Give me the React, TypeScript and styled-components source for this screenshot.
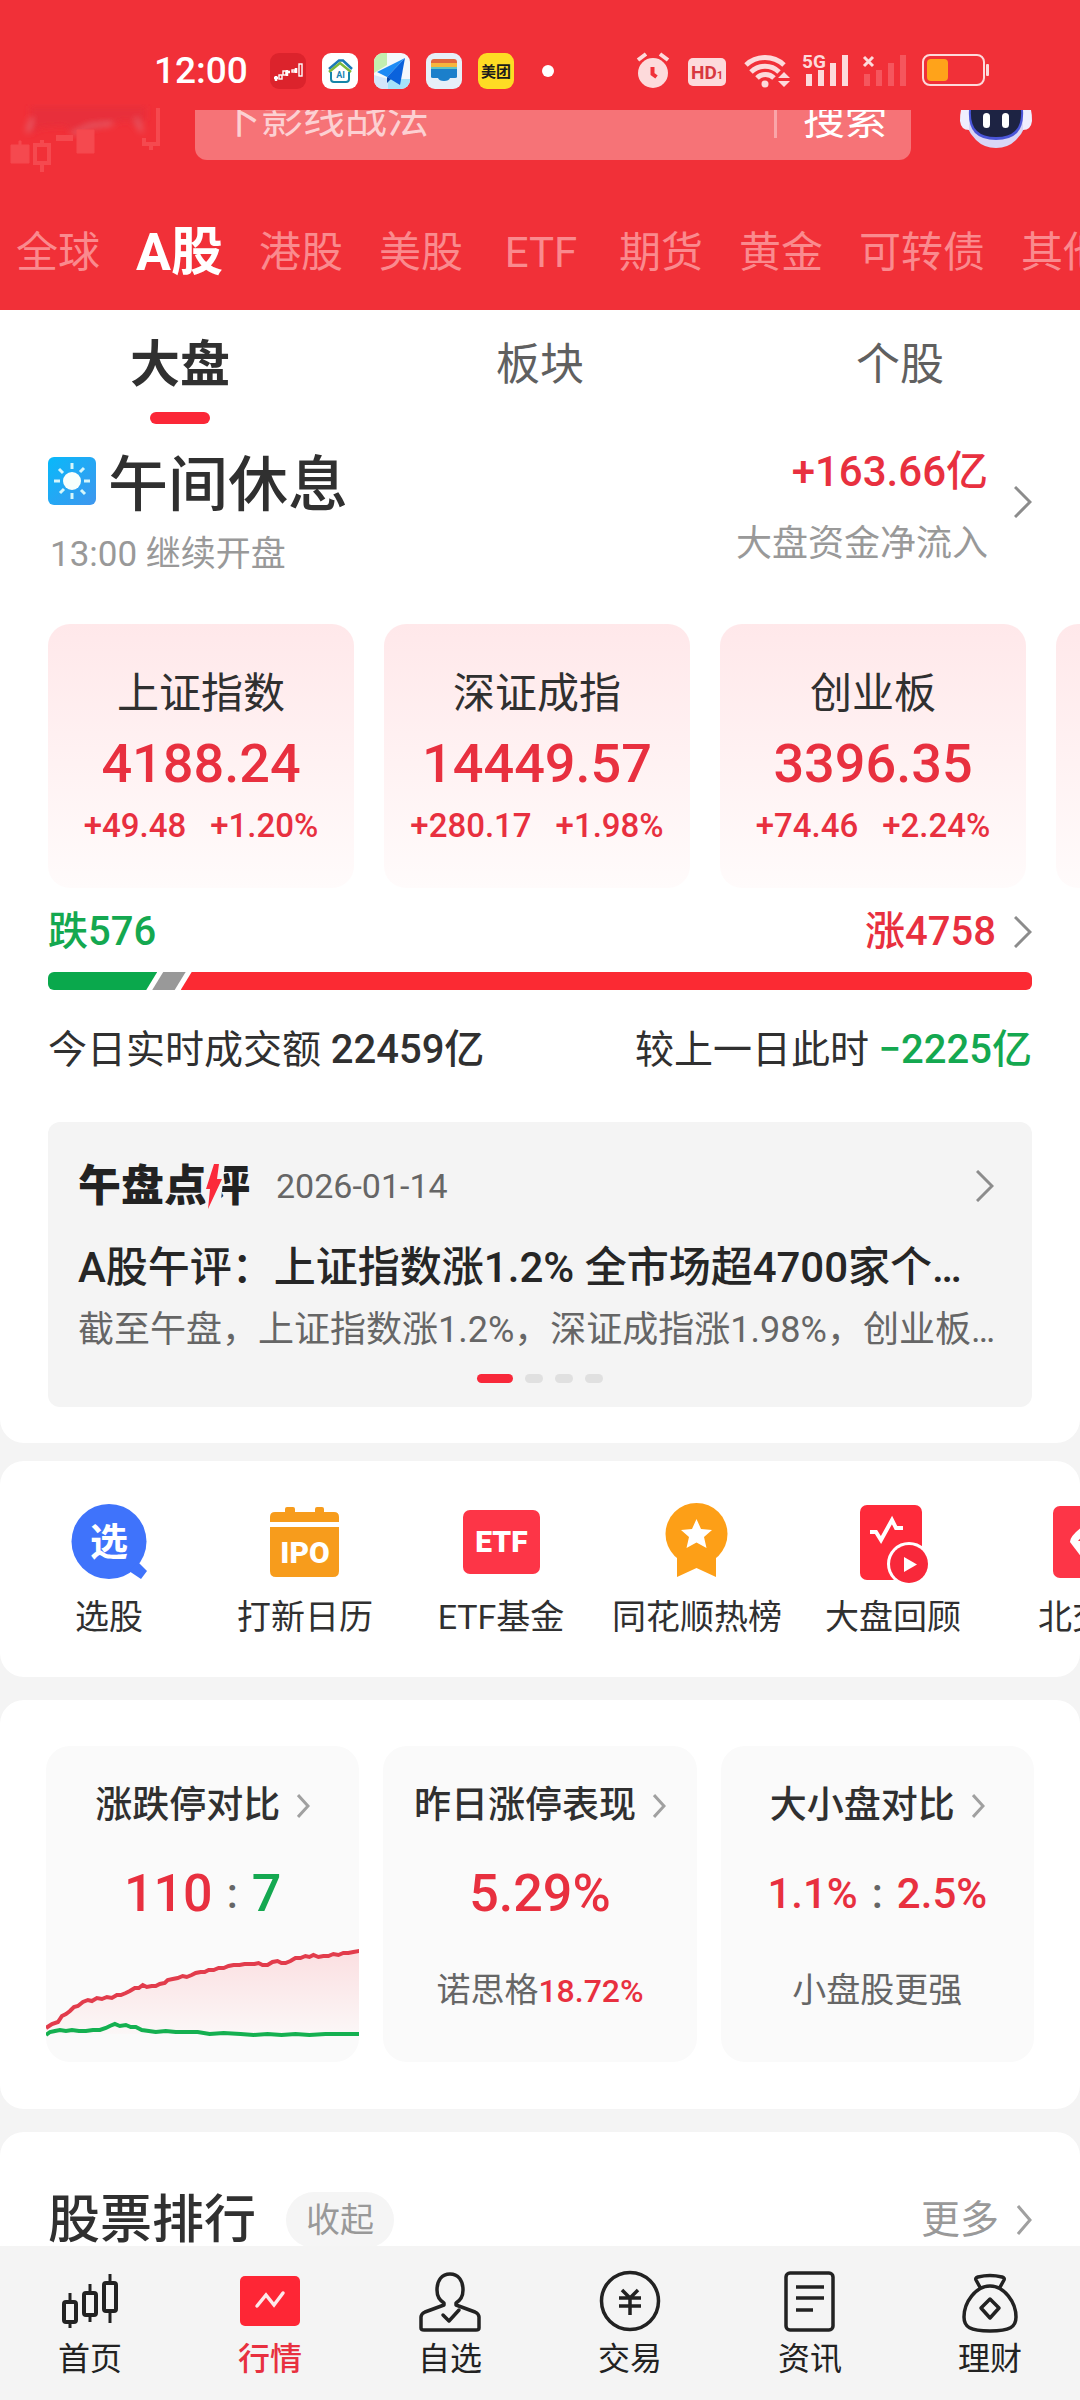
import React from "react";
import styled, { createGlobalStyle, css } from "styled-components";

const red = "#e8303f";
const green = "#14a850";
const brand = "#f13038";
const ink = "#303030";

const GlobalStyle = createGlobalStyle`
  *, *::before, *::after { box-sizing: border-box; }
  body {
    margin: 0;
    background: #f4f4f4;
    color: ${ink};
    font-family: Roboto, "Noto Sans CJK SC", sans-serif;
  }
  button, input { font: inherit; color: inherit; }
  button { border: 0; padding: 0; background: none; cursor: pointer; }
  a { color: inherit; text-decoration: none; }
  h2, h3, p { margin: 0; font-weight: 400; }
  svg { display: block; }
`;

const Screen = styled.div`
  display: flex;
  flex-direction: column;
  height: 100vh;
  overflow: hidden;
`;

/* ---------- header ---------- */

const Header = styled.header`
  flex: none;
  background: ${brand};
`;

const StatusBar = styled.div`
  display: flex;
  align-items: center;
  justify-content: space-between;
  height: 104px;
  padding: 38px 90px 0 154px;
`;

const StatusGroup = styled.div<{ $gap: number }>`
  display: flex;
  align-items: center;
  gap: ${(p) => p.$gap}px;
  color: #fff;
`;

const Clock = styled.time`
  width: 100px;
  font-size: 37px;
  line-height: 40px;
  font-weight: 500;
`;

const NoticeDot = styled.span`
  width: 12px;
  height: 12px;
  margin-left: 12px;
  border-radius: 50%;
  background: #fff;
`;

const SearchRow = styled.div`
  display: flex;
  align-items: flex-end;
  height: 56px;
`;

const LogoSlot = styled.div`
  flex: none;
  width: 195px;
  height: 56px;
`;

const SearchClip = styled.div`
  display: flex;
  flex: 1;
  align-items: flex-end;
  height: 50px;
  overflow: hidden;
`;

const SearchBox = styled.form`
  display: flex;
  flex: 1;
  align-items: center;
  height: 84px;
  padding: 0 24px;
  border-radius: 12px;
  background: #f67377;
`;

const SearchInput = styled.input`
  flex: 1;
  min-width: 0;
  height: 60px;
  padding: 0;
  border: 0;
  outline: 0;
  background: none;
  font-size: 42px;
  &::placeholder {
    color: #fcd0d2;
    opacity: 1;
  }
`;

const SearchButton = styled.button`
  height: 40px;
  padding-left: 26px;
  border-left: 3px solid #faa5a8;
  color: #fff;
  font-size: 42px;
  line-height: 44px;
`;

const RobotButton = styled.button`
  flex: none;
  display: flex;
  justify-content: center;
  width: 169px;
  height: 50px;
`;

const MarketTabs = styled.nav`
  display: flex;
  align-items: center;
  gap: 36px;
  height: 150px;
  padding: 36px 0 0 16px;
  overflow: hidden;
`;

const MarketTab = styled.button<{ $active?: boolean }>`
  flex: none;
  min-width: 84px;
  color: ${(p) => (p.$active ? "#fff" : "#fa8a8e")};
  font-size: ${(p) => (p.$active ? 52 : 42)}px;
  font-weight: ${(p) => (p.$active ? 700 : 400)};
  line-height: 64px;
`;

/* ---------- body ---------- */

const Main = styled.main`
  flex: 1;
  min-height: 0;
  overflow: hidden;
`;

const Panel = styled.section<{ $gap?: number; $square?: boolean }>`
  margin-top: ${(p) => p.$gap ?? 0}px;
  border-radius: ${(p) => (p.$square ? "0 0 24px 24px" : "24px")};
  background: #fff;
  overflow: hidden;
`;

const ViewTabs = styled.nav`
  display: grid;
  grid-template-columns: repeat(3, 1fr);
`;

const ViewTab = styled.button<{ $active?: boolean }>`
  display: flex;
  flex-direction: column;
  align-items: center;
  gap: 16px;
  padding-top: 24px;
  color: ${(p) => (p.$active ? ink : "#606060")};
  font-size: ${(p) => (p.$active ? 50 : 44)}px;
  font-weight: ${(p) => (p.$active ? 700 : 400)};
  line-height: 62px;
  &::after {
    content: "";
    width: 60px;
    height: 12px;
    border-radius: 6px;
    background: ${(p) => (p.$active ? "#fb2737" : "transparent")};
  }
`;

const Row = styled.div<{ $top: number }>`
  display: flex;
  justify-content: space-between;
  margin: ${(p) => p.$top}px 48px 0;
`;

const SessionTitle = styled.h2`
  display: flex;
  align-items: center;
  gap: 12px;
  padding-top: 2px;
  font-size: 60px;
  font-weight: 500;
  line-height: 72px;
  svg {
    margin-bottom: 10px;
  }
`;

const SessionNote = styled.p`
  margin-top: 8px;
  padding-left: 2px;
  color: #999;
  font-size: 35px;
  line-height: 50px;
`;

const FlowLink = styled.a`
  display: flex;
  align-items: center;
  gap: 26px;
  height: 116px;
  text-align: right;
  > svg {
    margin-bottom: 8px;
  }
`;

const FlowValue = styled.p`
  color: ${red};
  font-size: 42px;
  font-weight: 500;
  line-height: 48px;
`;

const FlowLabel = styled.p`
  margin-top: 28px;
  color: #999;
  font-size: 36px;
  line-height: 40px;
`;

const IndexRow = styled.div`
  display: flex;
  gap: 30px;
  margin-top: 44px;
  padding-left: 48px;
  overflow: hidden;
`;

const IndexCard = styled.a`
  flex: none;
  width: 306px;
  height: 264px;
  padding-top: 46px;
  border-radius: 22px;
  background: linear-gradient(#ffe8ea, #fffbfb);
  text-align: center;
`;

const IndexName = styled.h3`
  font-size: 42px;
  line-height: 48px;
`;

const IndexValue = styled.p`
  margin-top: 18px;
  color: ${red};
  font-size: 54px;
  font-weight: 500;
  line-height: 56px;
`;

const IndexChange = styled.p`
  display: flex;
  justify-content: center;
  gap: 24px;
  margin-top: 14px;
  color: ${red};
  font-size: 33px;
  font-weight: 500;
  line-height: 40px;
`;

const Breadth = styled.a<{ $color: string }>`
  display: flex;
  align-items: center;
  gap: 18px;
  color: ${(p) => p.$color};
  font-size: 40px;
  font-weight: 500;
  line-height: 48px;
`;

const BreadthBar = styled.div`
  display: flex;
  gap: 6px;
  height: 18px;
  margin: 16px 48px 0;
  border-radius: 6px;
  overflow: hidden;
`;

const Segment = styled.span<{ $color: string; $edge: "start" | "mid" | "end" }>`
  flex: ${(p) => (p.$edge === "end" ? "1" : "none")};
  margin-left: ${(p) => (p.$edge === "start" ? 0 : -11)}px;
  background: ${(p) => p.$color};
  clip-path: ${(p) =>
    p.$edge === "start"
      ? "polygon(0 0, 100% 0, calc(100% - 11px) 100%, 0 100%)"
      : p.$edge === "mid"
        ? "polygon(11px 0, 100% 0, calc(100% - 11px) 100%, 0 100%)"
        : "polygon(11px 0, 100% 0, 100% 100%, 0 100%)"};
`;

const Turnover = styled.p`
  font-size: 39px;
  line-height: 48px;
`;

const Strong = styled.strong<{ $color?: string; $size?: number }>`
  color: ${(p) => p.$color ?? "inherit"};
  font-size: ${(p) => p.$size ?? 40}px;
  font-weight: 500;
`;

const Review = styled.article`
  margin: 48px 48px 36px;
  padding: 36px 30px 24px;
  border-radius: 12px;
  background: #f4f4f4;
`;

const ReviewHead = styled.header`
  display: flex;
  align-items: center;
  padding-right: 8px;
`;

const ReviewBrand = styled.h2`
  position: relative;
  color: #222;
  font-size: 43px;
  font-style: oblique 8deg;
  font-weight: 900;
  line-height: 56px;
`;

const Bolt = styled.svg`
  position: absolute;
  top: 4px;
  left: 127px;
`;

const ReviewDate = styled.time`
  flex: 1;
  margin-left: 26px;
  color: #666;
  font-size: 34px;
  line-height: 56px;
`;

const oneLine = css`
  overflow: hidden;
  white-space: nowrap;
`;

const ReviewTitle = styled.h3`
  ${oneLine}
  margin-top: 26px;
  color: #262626;
  font-size: 42px;
  font-weight: 500;
  line-height: 56px;
`;

const ReviewText = styled.p`
  ${oneLine}
  margin-top: 10px;
  color: #666;
  font-size: 36px;
  line-height: 48px;
`;

const Pager = styled.div`
  display: flex;
  justify-content: center;
  gap: 12px;
  margin-top: 20px;
`;

const PagerDot = styled.span<{ $active?: boolean }>`
  width: ${(p) => (p.$active ? 36 : 18)}px;
  height: 9px;
  border-radius: 5px;
  background: ${(p) => (p.$active ? "#f8283a" : "#e0e0e0")};
`;

const Shortcuts = styled.nav`
  display: flex;
  padding: 40px 0 38px 11px;
`;

const Shortcut = styled.a`
  display: flex;
  flex: none;
  flex-direction: column;
  align-items: center;
  gap: 14px;
  width: 196px;
  font-size: 34px;
  line-height: 44px;
`;

const StatGrid = styled.div`
  display: grid;
  grid-template-columns: repeat(3, 1fr);
  gap: 24px;
  padding: 46px 46px 47px;
`;

const StatCard = styled.a`
  height: 316px;
  padding-top: 36px;
  border-radius: 24px;
  background: #fafafa;
  text-align: center;
`;

const StatTitle = styled.h3`
  display: flex;
  align-items: center;
  justify-content: center;
  gap: 17px;
  font-size: 37px;
  font-weight: 500;
  line-height: 48px;
`;

const StatValue = styled.p<{ $size: number }>`
  display: flex;
  align-items: center;
  justify-content: center;
  gap: 14px;
  margin-top: 32px;
  color: ${red};
  font-size: ${(p) => p.$size}px;
  font-weight: 500;
  line-height: 64px;
`;

const Versus = styled.span`
  color: #666;
  font-size: 42px;
  font-weight: 500;
  line-height: 60px;
`;

const Fall = styled.span`
  color: ${green};
`;

const StatNote = styled.p`
  margin-top: 42px;
  color: #666;
  font-size: 34px;
  line-height: 44px;
`;

const StatChart = styled.svg`
  width: 100%;
  height: 100px;
  margin-top: 18px;
`;

const RankHead = styled.div`
  display: flex;
  align-items: center;
  padding: 56px 48px 60px;
`;

const RankTitle = styled.h2`
  padding-top: 3px;
  font-size: 52px;
  font-weight: 500;
  line-height: 60px;
`;

const Chip = styled.button`
  width: 108px;
  height: 56px;
  margin-left: 30px;
  border-radius: 28px;
  background: #f5f5f5;
  color: #999;
  font-size: 34px;
  line-height: 56px;
`;

const More = styled.a`
  display: flex;
  align-items: center;
  gap: 18px;
  margin-left: auto;
  color: #999;
  font-size: 39px;
  line-height: 56px;
`;

/* ---------- bottom bar ---------- */

const BottomBar = styled.nav`
  display: grid;
  flex: none;
  grid-template-columns: repeat(6, 1fr);
  height: 154px;
  background: #f4f4f4;
`;

const BottomItem = styled.a<{ $active?: boolean }>`
  display: flex;
  flex-direction: column;
  align-items: center;
  gap: 6px;
  padding-top: 23px;
  color: ${(p) => (p.$active ? red : "#222")};
  font-size: 32px;
  font-weight: ${(p) => (p.$active ? 500 : 400)};
  line-height: 40px;
`;

/* ---------- drawings ---------- */

const Chevron = ({ w = 18, h = 32, color = "#8c8c8c" }: { w?: number; h?: number; color?: string }) => (
  <svg width={w} height={h} viewBox={`0 0 ${w} ${h}`} fill="none" stroke={color} strokeWidth="3" aria-hidden="true">
    <path d={`M1 1 L${w - 2} ${h / 2} L1 ${h - 1}`} />
  </svg>
);

const svgText = { fontFamily: 'Roboto, "Noto Sans CJK SC", sans-serif' };

const AppIcons = () => (
  <>
    <svg width="36" height="36" viewBox="0 0 36 36">
      <rect width="36" height="36" rx="9" fill="#dc232c" />
      <g stroke="#fff" strokeWidth="1.4" fill="none">
        <path d="M4 25h4M6 23v5M17 17v6M17 19h3" strokeWidth="2.4" />
        <rect x="9" y="22" width="3" height="4" />
        <rect x="13" y="18" width="3" height="4" />
        <rect x="22" y="17" width="3" height="2" />
        <path d="M26 15v5" strokeWidth="2.6" />
        <rect x="29" y="11" width="3" height="12" />
      </g>
    </svg>
    <svg width="36" height="36" viewBox="0 0 36 36">
      <rect width="36" height="36" rx="9" fill="#fff" />
      <path d="M7 16 17 7.500h4L30 16" fill="none" stroke="#1b77b8" strokeWidth="2.500" />
      <path d="M7 19 18 10l11 9" fill="none" stroke="#7cb93c" strokeWidth="2.500" />
      <path d="M9 19v7q0 3 3 3h12q3 0 3-3v-7" fill="none" stroke="#1585a8" strokeWidth="2" />
      <text x="18.500" y="25" fontSize="9" fontWeight="700" fill="#1b83b4" textAnchor="middle" style={svgText}>AI</text>
    </svg>
    <svg width="36" height="36" viewBox="0 0 36 36">
      <defs><clipPath id="mapClip"><rect width="36" height="36" rx="9" /></clipPath></defs>
      <g clipPath="url(#mapClip)">
        <rect width="36" height="36" fill="#f4f8fb" />
        <path d="M0 0h13v12L0 20z" fill="#c4eeb0" />
        <path d="M14 36V26h22v10z" fill="#a6e2fa" />
        <path d="M0 22l14 4v10H0z" fill="#d3e6fb" />
      </g>
      <path d="M31 5 3 19l10 5z" fill="#1e8bf5" />
      <path d="M31 5 13 24l13 8z" fill="#0a62dc" />
      <path d="M13 24v6l4-4z" fill="#0847a8" />
    </svg>
    <svg width="36" height="36" viewBox="0 0 36 36">
      <rect width="36" height="36" rx="9" fill="#e6eff8" />
      <path d="M5 9q0-3 3-3h20q3 0 3 3v3H5z" fill="#e2683c" />
      <path d="M5 10h26v5H5z" fill="#f6b63c" />
      <path d="M5 14h26v3H5z" fill="#62c4c0" />
      <path d="M5 16h26v8q0 1-2 1h-5q-1 3-6 3t-6-3H7q-2 0-2-1z" fill="#1b7fcb" />
    </svg>
    <svg width="36" height="36" viewBox="0 0 36 36">
      <rect width="36" height="36" rx="9" fill="#fedc24" />
      <text x="18" y="23.500" fontSize="15" fontWeight="700" fill="#1b1b1b" textAnchor="middle" style={svgText}>美团</text>
    </svg>
  </>
);

const pale = "#fddadb";

const SystemIcons = () => (
  <svg width="354" height="38" viewBox="0 0 354 38" aria-hidden="true">
    {/* alarm */}
    <circle cx="17" cy="21" r="15" fill={pale} />
    <path d="M2 8l8-6M32 8l-8-6" stroke={pale} strokeWidth="4" />
    <path d="M16.500 15v7l4 3" stroke={brand} strokeWidth="4" fill="none" />
    {/* HD */}
    <rect x="52" y="6" width="38" height="28" rx="5" fill={pale} />
    <text x="55" y="27" fontSize="19" fontWeight="700" fill="#d8383f" style={svgText}>HD<tspan fontSize="11">1</tspan></text>
    {/* wifi */}
    <g fill="none" stroke={pale} strokeWidth="5">
      <path d="M110 13a28 28 0 0 1 38 0" />
      <path d="M115 20a20 20 0 0 1 28 0" />
      <path d="M121 26a12 12 0 0 1 17 0" />
    </g>
    <circle cx="129" cy="32" r="3.500" fill={pale} />
    <path d="M142 26l6-6 6 6zM142 29h12l-6 6z" fill={pale} />
    {/* 5G */}
    <text x="166" y="16" fontSize="19" fontWeight="700" fill={pale} style={svgText}>5G</text>
    <g fill={pale}>
      <rect x="170" y="22" width="6" height="12" />
      <rect x="182" y="18" width="6" height="16" />
      <rect x="194" y="11" width="6" height="23" />
      <rect x="206" y="3" width="6" height="31" />
    </g>
    {/* empty second SIM */}
    <path d="M228 5l9 9M237 5l-9 9" stroke={pale} strokeWidth="3" />
    <g fill="#f5565d">
      <rect x="228" y="22" width="6" height="12" />
      <rect x="240" y="18" width="6" height="16" />
      <rect x="252" y="11" width="6" height="23" />
      <rect x="264" y="3" width="6" height="31" />
    </g>
    {/* battery */}
    <rect x="287" y="3" width="61" height="30" rx="7" fill="none" stroke={pale} strokeWidth="2" />
    <rect x="291" y="7" width="21" height="22" rx="4" fill="#ffa31a" />
    <rect x="350" y="12" width="3" height="12" rx="1" fill={pale} />
  </svg>
);

const CandleLogo = () => (
  <svg width="195" height="72" viewBox="0 0 195 72" aria-hidden="true">
    <defs>
      <filter id="soft" x="-10%" y="-10%" width="120%" height="120%"><feGaussianBlur stdDeviation="3" /></filter>
    </defs>
    <g filter="url(#soft)">
      <path d="M30 2h116v14l-10 8-6-8-22 4-30 12-14-10-24 2-10 6z" fill="#e42c3a" opacity=".7" />
      <path d="M27 28l5-14M72 30l18-8 22-2M136 14l6 14" stroke="#e08a98" strokeWidth="3" fill="none" opacity=".6" />
    </g>
    <g fill="#f5494f" stroke="#f5494f">
      <path d="M11 41h18v18H11zM19 37h2v4h-2z" />
      <path d="M56 31h17v6H56z" stroke="none" />
      <path d="M77 26h17v23H77z" />
      <g fill="none" strokeWidth="4">
        <path d="M35 41h14v18H35zM42 36v4M42 60v8" />
        <path d="M158 4v36h-14v-6M151 41v5" />
      </g>
    </g>
  </svg>
);

const Robot = () => (
  <svg width="74" height="40" viewBox="0 0 74 40" aria-hidden="true">
    <path d="M5 0h64q0 18-12 30-8 8-20 8t-20-8Q5 18 5 0z" fill="#d9d6f6" />
    <path d="M2 0h8v20q-8 0-9-9 0-7 1-11zM64 0h8q1 4 1 11-1 9-9 9z" fill="#efeefe" />
    <path d="M10 0h54q1 15-6 23-7 7-21 7t-21-7Q9 15 10 0z" fill="#4a55d8" />
    <path d="M12 0h50q1 14-6 21-6 6-19 6t-19-6Q11 14 12 0z" fill="#1d2343" />
    <rect x="24" y="3" width="7" height="15" rx="3.500" fill="#fff" />
    <rect x="43" y="3" width="7" height="15" rx="3.500" fill="#fff" />
  </svg>
);

const SunIcon = () => (
  <svg width="48" height="48" viewBox="0 0 48 48" aria-hidden="true">
    <defs>
      <linearGradient id="sky" x1="0" y1="0" x2="1" y2="1">
        <stop offset="0" stopColor="#08b9fa" />
        <stop offset="1" stopColor="#3f96ee" />
      </linearGradient>
    </defs>
    <rect width="48" height="48" rx="6" fill="url(#sky)" />
    <circle cx="24" cy="24" r="9" fill="#f7fffc" />
    <path d="M24 6v6M24 36v6M6 24h6M36 24h6M11 12l4 4M33 33l4 4M36 11l-4 4M16 32l-4 4" stroke="#d5f6fb" strokeWidth="3" />
  </svg>
);

const iconBox = { width: 80, height: 80, viewBox: "0 0 80 80", "aria-hidden": true, overflow: "visible" } as const;

const PickIcon = () => (
  <svg {...iconBox}>
    <circle cx="40" cy="40.500" r="37.500" fill="#3f73fb" />
    <path d="M60 70l9-9 9 9-6 8z" fill="#3f73fb" />
    <text x="40" y="54" fontSize="38" fontWeight="700" fill="#fff" textAnchor="middle" style={svgText}>选</text>
  </svg>
);

const IpoIcon = () => (
  <svg {...iconBox}>
    <path d="M5 21v-5q0-5 5-5h10V8q0-2 2-2h6q2 0 2 2v3h20V8q0-2 2-2h5q2 0 2 2v3h10q5 0 5 5v5z" fill="#f79c1c" />
    <path d="M5 26h69v44q0 6-6 6H11q-6 0-6-6z" fill="#f79c1c" />
    <text x="40" y="62" fontSize="30" fontWeight="900" fill="#fff" textAnchor="middle" style={svgText}>IPO</text>
  </svg>
);

const EtfIcon = () => (
  <svg {...iconBox}>
    <rect x="2" y="9" width="77" height="64" rx="7" fill="#fd3547" />
    <text x="40.500" y="51" fontSize="30" fontWeight="900" fill="#fff" textAnchor="middle" style={svgText}>ETF</text>
  </svg>
);

const MedalIcon = () => (
  <svg {...iconBox}>
    <circle cx="39.500" cy="33" r="31" fill="#fd9f17" />
    <path d="M20 54h39v22l-19.500-9L20 76z" fill="#fd9f17" />
    <path d="M39.500 18l4.500 10 11 1-8 7 2.500 11-10-5.500-10 5.500L32 36l-8-7 11-1z" fill="#fff" />
  </svg>
);

const ReplayIcon = () => (
  <svg {...iconBox}>
    <rect x="7" y="4" width="62" height="75" rx="7" fill="#fe2a3a" />
    <path d="M17 31h6l5 8 11-20 4 8h7" fill="none" stroke="#fff" strokeWidth="4" />
    <circle cx="56" cy="63" r="20" fill="none" stroke="#fff" strokeWidth="4" />
    <circle cx="56" cy="63" r="19" fill="#f8283a" />
    <path d="M51 56l13 7.500L51 71z" fill="#fff" />
    <path d="M36 80h8l2 4H36z" fill="#fff" />
  </svg>
);

const NorthIcon = () => (
  <svg {...iconBox}>
    <rect x="4" y="5" width="72" height="72" rx="7" fill="#fd3547" />
    <path d="M21 41q0-6 12-15l7-4 7 4q12 9 12 15L40 66z" fill="#fff" />
    <path d="M29 40l11-12 11 12z" fill="#fd3547" />
  </svg>
);

const NavHome = () => (
  <svg width="64" height="64" viewBox="0 0 64 64" fill="none" stroke="#222" strokeWidth="4" aria-hidden="true">
    <rect x="6" y="33" width="12" height="20" rx="2" />
    <rect x="26" y="24" width="12" height="22" rx="2" />
    <rect x="46" y="14" width="12" height="28" rx="2" />
    <path d="M12 24v9M12 53v6M32 15v9M32 46v7M52 5v9M52 42v12" strokeWidth="3" />
  </svg>
);

const NavQuotes = () => (
  <svg width="64" height="64" viewBox="0 0 64 64" aria-hidden="true">
    <rect x="2" y="7" width="60" height="50" rx="5" fill="#fe2635" />
    <path d="M19 37l9-11 8 10 9-12" fill="none" stroke="#fde8ea" strokeWidth="3.500" strokeLinecap="round" />
  </svg>
);

const NavWatch = () => (
  <svg width="64" height="64" viewBox="0 0 64 64" fill="none" stroke="#222" strokeWidth="3.500" strokeLinecap="round" strokeLinejoin="round" aria-hidden="true">
    <path d="M26 34c-5-3-7-7-7-13 0-10 5-16 13-16s13 6 13 16c0 6-2 10-7 13v2l19 7q4 2 4 5v11q0 2-3 2H6q-3 0-3-2V48q0-3 4-5l19-7z" />
    <path d="M25 46l6 6 10-11" />
  </svg>
);

const NavTrade = () => (
  <svg width="64" height="64" viewBox="0 0 64 64" fill="none" stroke="#222" strokeWidth="3.500" aria-hidden="true">
    <circle cx="32" cy="32" r="28.500" />
    <path d="M24 21l8 8 8-8M32 29v17M21 29h22M21 37h22" />
  </svg>
);

const NavNews = () => (
  <svg width="64" height="64" viewBox="0 0 64 64" fill="none" stroke="#222" strokeWidth="3.500" aria-hidden="true">
    <rect x="8" y="4" width="47" height="57" rx="4" />
    <path d="M18 18h28M18 29h28M18 41h17" />
  </svg>
);

const NavWealth = () => (
  <svg width="64" height="64" viewBox="0 0 64 64" fill="none" stroke="#222" strokeWidth="3.500" strokeLinejoin="round" aria-hidden="true">
    <path d="M23 20l-5-9q-1-2 2-3 12-3 24 0 3 1 2 3l-5 9" />
    <path d="M32 17c-14 0-26 16-26 31 0 10 6 14 26 14s26-4 26-14c0-15-12-31-26-31z" />
    <path d="M32 30l9 9-9 10-9-10z" />
  </svg>
);

const risePoints =
  "0,84 6,80 12,78 16,72 20,70 24,67 28,63 32,62 37,58 42,56 46,57 51,54 56,55 61,53 66,54 71,51 75,51 80,49 84,47 89,44 93,44 97,41 101,43 106,42 110,42 114,40 119,39 122,36 127,35 132,34 137,32 141,33 146,31 150,29 155,28 159,28 163,26 168,26 173,24 178,24 183,22 188,21 194,21 199,20 204,20 209,20 213,19 217,21 222,21 227,18 232,17 236,19 240,19 245,17 250,14 255,14 260,12 264,13 268,11 273,13 278,12 283,12 288,10 293,11 298,9 303,9 308,8 314,7";
const fallPoints =
  "0,91 4,88 9,87 14,86 20,87 26,86 33,87 40,87 47,86 54,86 60,84 64,82 69,80 74,82 80,81 85,83 90,83 96,86 103,87 110,88 120,87 130,88 142,88 152,88 164,90 178,89 195,90 208,91 222,90 236,91 250,90 264,91 280,90 298,90 314,90";

/* ---------- data ---------- */

const markets = ["全球", "A股", "港股", "美股", "ETF", "期货", "黄金", "可转债", "其他"];

const indices = [
  { name: "上证指数", value: "4188.24", change: "+49.48", percent: "+1.20%" },
  { name: "深证成指", value: "14449.57", change: "+280.17", percent: "+1.98%" },
  { name: "创业板", value: "3396.35", change: "+74.46", percent: "+2.24%" },
];

const shortcuts = [
  { label: "选股", Icon: PickIcon },
  { label: "打新日历", Icon: IpoIcon },
  { label: "ETF基金", Icon: EtfIcon },
  { label: "同花顺热榜", Icon: MedalIcon },
  { label: "大盘回顾", Icon: ReplayIcon },
  { label: "北交所", Icon: NorthIcon },
];

const bottomItems = [
  { label: "首页", Icon: NavHome },
  { label: "行情", Icon: NavQuotes },
  { label: "自选", Icon: NavWatch },
  { label: "交易", Icon: NavTrade },
  { label: "资讯", Icon: NavNews },
  { label: "理财", Icon: NavWealth },
];

export default function App() {
  return (
    <Screen>
      <GlobalStyle />
      <Header>
        <StatusBar>
          <StatusGroup $gap={16}>
            <Clock>12:00</Clock>
            <AppIcons />
            <NoticeDot />
          </StatusGroup>
          <StatusGroup $gap={0}>
            <SystemIcons />
          </StatusGroup>
        </StatusBar>
        <SearchRow>
          <LogoSlot><CandleLogo /></LogoSlot>
          <SearchClip>
            <SearchBox>
              <SearchInput type="text" placeholder="下影线战法" aria-label="搜索" />
              <SearchButton type="button">搜索</SearchButton>
            </SearchBox>
          </SearchClip>
          <RobotButton type="button" aria-label="智能助手"><Robot /></RobotButton>
        </SearchRow>
        <MarketTabs>
          {markets.map((m) => (
            <MarketTab key={m} type="button" $active={m === "A股"}>{m}</MarketTab>
          ))}
        </MarketTabs>
      </Header>

      <Main>
        <Panel $square>
          <ViewTabs>
            <ViewTab type="button" $active>大盘</ViewTab>
            <ViewTab type="button">板块</ViewTab>
            <ViewTab type="button">个股</ViewTab>
          </ViewTabs>

          <Row $top={24}>
            <div>
              <SessionTitle><SunIcon />午间休息</SessionTitle>
              <SessionNote>13:00 继续开盘</SessionNote>
            </div>
            <FlowLink href="#flow">
              <div>
                <FlowValue>+163.66亿</FlowValue>
                <FlowLabel>大盘资金净流入</FlowLabel>
              </div>
              <Chevron />
            </FlowLink>
          </Row>

          <IndexRow>
            {indices.map((i) => (
              <IndexCard key={i.name} href="#index">
                <IndexName>{i.name}</IndexName>
                <IndexValue>{i.value}</IndexValue>
                <IndexChange><span>{i.change}</span><span>{i.percent}</span></IndexChange>
              </IndexCard>
            ))}
            <IndexCard href="#index" aria-label="更多指数" />
          </IndexRow>

          <Row $top={20}>
            <Breadth $color={green} href="#fall">跌576</Breadth>
            <Breadth $color={red} href="#rise">涨4758<Chevron /></Breadth>
          </Row>
          <BreadthBar>
            <Segment $color="#0aa84c" $edge="start" style={{ width: "11.1%" }} />
            <Segment $color="#999" $edge="mid" style={{ width: "3.4%" }} />
            <Segment $color="#fb2a33" $edge="end" />
          </BreadthBar>

          <Row $top={36}>
            <Turnover>今日实时成交额 <Strong>22459亿</Strong></Turnover>
            <Turnover>较上一日此时 <Strong $color={green}>−2225亿</Strong></Turnover>
          </Row>

          <Review>
            <ReviewHead>
              <ReviewBrand>
                午盘点评
                <Bolt width="20" height="48" viewBox="0 0 20 48" aria-hidden="true">
                  <path d="M3 0h17L15 48H0z" fill="#f4f4f4" />
                  <path d="M9 2h5l-2 15h5L3 47l2-20H1z" fill="#fb2a3a" />
                </Bolt>
              </ReviewBrand>
              <ReviewDate>2026-01-14</ReviewDate>
              <Chevron />
            </ReviewHead>
            <ReviewTitle>A股午评：上证指数涨1.2% 全市场超4700家个…</ReviewTitle>
            <ReviewText>截至午盘，上证指数涨1.2%，深证成指涨1.98%，创业板…</ReviewText>
            <Pager>
              <PagerDot $active />
              <PagerDot />
              <PagerDot />
              <PagerDot />
            </Pager>
          </Review>
        </Panel>

        <Panel $gap={18}>
          <Shortcuts>
            {shortcuts.map(({ label, Icon }) => (
              <Shortcut key={label} href="#tool"><Icon />{label}</Shortcut>
            ))}
          </Shortcuts>
        </Panel>

        <Panel $gap={23}>
          <StatGrid>
            <StatCard href="#limit">
              <StatTitle>涨跌停对比<Chevron w={13} h={24} color="#a0a0a0" /></StatTitle>
              <StatValue $size={52}>110<Versus>:</Versus><Fall>7</Fall></StatValue>
              <StatChart viewBox="0 0 314 100" preserveAspectRatio="none" aria-hidden="true">
                <defs>
                  <linearGradient id="rise" x1="0" y1="0" x2="0" y2="1">
                    <stop offset="0" stopColor="#fbdfe1" />
                    <stop offset="1" stopColor="#fbf7f7" />
                  </linearGradient>
                </defs>
                <polygon points={`${risePoints} 314,90 0,90`} fill="url(#rise)" />
                <polyline points={risePoints} fill="none" stroke="#e23c4c" strokeWidth="4" />
                <polyline points={fallPoints} fill="none" stroke="#14b050" strokeWidth="4" />
              </StatChart>
            </StatCard>
            <StatCard href="#yesterday">
              <StatTitle>昨日涨停表现<Chevron w={13} h={24} color="#a0a0a0" /></StatTitle>
              <StatValue $size={52}>5.29%</StatValue>
              <StatNote>诺思格<Strong $color={red} $size={32}>18.72%</Strong></StatNote>
            </StatCard>
            <StatCard href="#size">
              <StatTitle>大小盘对比<Chevron w={13} h={24} color="#a0a0a0" /></StatTitle>
              <StatValue $size={42}>1.1%<Versus>:</Versus>2.5%</StatValue>
              <StatNote>小盘股更强</StatNote>
            </StatCard>
          </StatGrid>
        </Panel>

        <Panel $gap={23}>
          <RankHead>
            <RankTitle>股票排行</RankTitle>
            <Chip type="button">收起</Chip>
            <More href="#more">更多<Chevron w={15} h={30} color="#a0a0a0" /></More>
          </RankHead>
        </Panel>
      </Main>

      <BottomBar>
        {bottomItems.map(({ label, Icon }) => (
          <BottomItem key={label} href="#nav" $active={label === "行情"}><Icon />{label}</BottomItem>
        ))}
      </BottomBar>
    </Screen>
  );
}
